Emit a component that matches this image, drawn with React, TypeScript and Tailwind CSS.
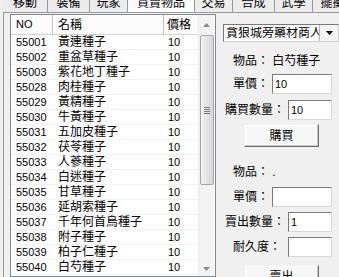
import React from "react";

const rows: [string, string][] = [
  ["55001", "黃連種子"],
  ["55002", "重盆草種子"],
  ["55003", "紫花地丁種子"],
  ["55028", "肉桂種子"],
  ["55029", "黃精種子"],
  ["55030", "牛黃種子"],
  ["55031", "五加皮種子"],
  ["55032", "茯苓種子"],
  ["55033", "人蔘種子"],
  ["55034", "白迷種子"],
  ["55035", "甘草種子"],
  ["55036", "延胡索種子"],
  ["55037", "千年何首烏種子"],
  ["55038", "附子種子"],
  ["55039", "柏子仁種子"],
  ["55040", "白芍種子"],
];

const tabs: { label: string; w: string; sel?: boolean }[] = [
  { label: "移動", w: "w-[45px]" },
  { label: "裝備", w: "w-[42px]" },
  { label: "玩家", w: "w-[38px]" },
  { label: "買賣物品", w: "w-[67px]", sel: true },
  { label: "交易", w: "w-[38px]" },
  { label: "合成", w: "w-[42px]" },
  { label: "武學", w: "w-[38px]" },
  { label: "擺攤", w: "w-[40px]" },
];

function Input({ w, value }: { w: string; value?: string }) {
  return (
    <div
      className={`${w} h-[20px] bg-white border border-t-[#7a7a7a] border-l-[#7a7a7a] border-r-[#d8d8d8] border-b-[#d8d8d8] flex items-center pl-[2px] text-[11px] leading-none`}
    >
      {value}
    </div>
  );
}

function Button({ label }: { label: string }) {
  return (
    <div className="ml-[28px] w-[75px] h-[23px] bg-[#f7f7f7] border border-t-[#f0f0f0] border-l-[#f0f0f0] border-r-[#6e6e6e] border-b-[#6e6e6e] shadow-[inset_-1px_-1px_0_#c8c8c8,inset_1px_1px_0_#ffffff] flex items-center justify-center text-[12px] leading-none">
      {label}
    </div>
  );
}

export default function App() {
  return (
    <div className="w-[339px] h-[277px] overflow-hidden bg-[#f0f0f0] text-black font-['Liberation_Sans','Noto_Sans_CJK_TC',sans-serif] flex flex-col">
      {/* tabs */}
      <div className="h-[12px] flex pl-[3px] overflow-hidden shrink-0">
        {tabs.map((t) => (
          <div
            key={t.label}
            className={`${t.w} shrink-0 h-[12px] border-r border-[#9a9a9a] flex justify-center ${t.sel ? "bg-[#fafafa]" : "bg-[#ececec]"}`}
          >
            <span className="text-[12px] leading-[12px] mt-[-3px] whitespace-nowrap">{t.label}</span>
          </div>
        ))}
      </div>
      {/* panel */}
      <div className="flex-1 ml-[3px] border-t border-l border-[#9a9a9a] flex">
        {/* list */}
        <div className="ml-[6px] mt-[1px] w-[206px] h-[263px] shrink-0 bg-white border border-[#828790] flex">
          <div className="w-[187px] flex flex-col">
            <div className="h-[20px] shrink-0 flex border-b border-[#d5d5d5] bg-[#fbfbfb] text-[12px] leading-none">
              <div className="w-[42px] border-r border-[#c5c5c5] flex items-center pl-[5px] text-[11px]">NO</div>
              <div className="w-[111px] border-r border-[#c5c5c5] flex items-center pl-[5px]">名稱</div>
              <div className="flex-1 flex items-center pl-[3px]">價格</div>
            </div>
            {rows.map(([no, name]) => (
              <div key={no} className="h-[15px] shrink-0 flex border-b border-[#f2f2f2]">
                <div className="w-[42px] flex items-center pl-[5px] text-[11px] leading-none">{no}</div>
                <div className="w-[111px] flex items-center pl-[5px] text-[12px] leading-none whitespace-nowrap">{name}</div>
                <div className="flex-1 flex items-center pl-[4px] text-[11px] leading-none">10</div>
              </div>
            ))}
          </div>
          {/* scrollbar */}
          <div className="w-[16px] bg-[#f3f3f3] border-l border-[#ececec] flex flex-col items-center">
            <div className="h-[20px] w-full flex items-center justify-center">
              <svg width="7" height="4" viewBox="0 0 7 4">
                <path d="M0 4 L3.5 0 L7 4 Z" fill="#8a8a8a" />
              </svg>
            </div>
            <div className="w-[14px] h-[150px] rounded-[2px] border border-[#a5a5a5] bg-gradient-to-r from-[#f4f4f4] via-[#e4e4e6] to-[#d6d6d8] flex items-center justify-center">
              <div className="flex flex-col gap-[1px]">
                <div className="w-[6px] h-[1px] bg-[#7a7a7a]" />
                <div className="w-[6px] h-[1px] bg-[#7a7a7a]" />
                <div className="w-[6px] h-[1px] bg-[#7a7a7a]" />
                <div className="w-[6px] h-[1px] bg-[#7a7a7a]" />
              </div>
            </div>
            <div className="flex-1" />
            <div className="h-[14px] w-full flex items-center justify-center">
              <svg width="7" height="4" viewBox="0 0 7 4">
                <path d="M0 0 L3.5 4 L7 0 Z" fill="#8a8a8a" />
              </svg>
            </div>
          </div>
        </div>
        {/* right panel */}
        <div className="flex-1 flex flex-col text-[12px] leading-none">
          <div className="mt-[11px] ml-[7px] w-[116px] h-[18px] bg-white border border-t-[#7a7a7a] border-l-[#7a7a7a] border-r-[#d0d0d0] border-b-[#d0d0d0] flex items-center">
            <div className="flex-1 overflow-hidden whitespace-nowrap pl-[2px] text-[12px]">貪狼城旁藥材商人</div>
            <div className="w-[19px] h-full bg-[#f4f4f4] border-l border-[#b5b5b5] flex items-center justify-center">
              <svg width="7" height="4" viewBox="0 0 7 4">
                <path d="M0 0 L3.5 4 L7 0 Z" fill="#000" />
              </svg>
            </div>
          </div>
          <div className="mt-[12px] h-[14px] pl-[17px] flex items-center whitespace-nowrap">物品：&nbsp;白芍種子</div>
          <div className="mt-[6px] flex items-center pr-[7px]">
            <span className="pl-[17px]">單價：</span>
            <div className="ml-auto">
              <Input w="w-[60px]" value="10" />
            </div>
          </div>
          <div className="mt-[6px] flex items-center pr-[7px]">
            <span className="pl-[9px]">購買數量：</span>
            <div className="ml-auto">
              <Input w="w-[44px]" value="10" />
            </div>
          </div>
          <div className="mt-[4px]">
            <Button label="購買" />
          </div>
          <div className="mt-[18px] h-[14px] pl-[17px] flex items-center whitespace-nowrap">物品：&nbsp;.</div>
          <div className="mt-[8px] flex items-center pr-[7px]">
            <span className="pl-[17px]">單價：</span>
            <div className="ml-auto">
              <Input w="w-[60px]" />
            </div>
          </div>
          <div className="mt-[5px] flex items-center pr-[7px]">
            <span className="pl-[9px]">賣出數量：</span>
            <div className="ml-auto">
              <Input w="w-[44px]" value="1" />
            </div>
          </div>
          <div className="mt-[5px] flex items-center pr-[7px]">
            <span className="pl-[17px]">耐久度：</span>
            <div className="ml-auto">
              <Input w="w-[44px]" />
            </div>
          </div>
          <div className="mt-[8px]">
            <Button label="賣出" />
          </div>
        </div>
      </div>
    </div>
  );
}
